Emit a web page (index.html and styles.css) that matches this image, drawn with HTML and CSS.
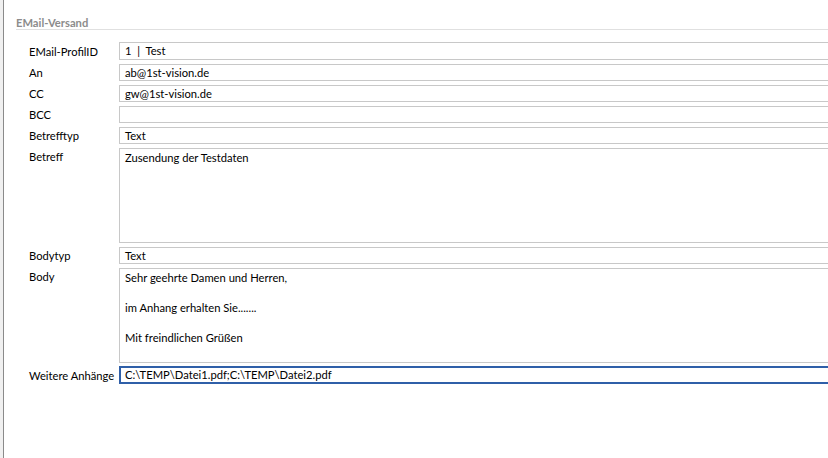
FILE: index.html
```html
<!DOCTYPE html>
<html lang="de">
<head>
    <meta charset="UTF-8">
    <meta name="viewport" content="width=device-width, initial-scale=1.0">
    <title>EMail-Versand</title>
    <link rel="stylesheet" href="styles.css">
</head>
<body>
    <div class="frame">
        <div class="section">
            <div class="section-title">EMail-Versand</div>
            <div class="form">
                <label class="lbl">EMail-ProfilID</label>
                <div class="field first">1&nbsp; |&nbsp; Test</div>

                <label class="lbl">An</label>
                <div class="field">ab@1st-vision.de</div>

                <label class="lbl">CC</label>
                <div class="field">gw@1st-vision.de</div>

                <label class="lbl">BCC</label>
                <div class="field"></div>

                <label class="lbl">Betrefftyp</label>
                <div class="field">Text</div>

                <label class="lbl">Betreff</label>
                <div class="field area">Zusendung der Testdaten</div>

                <label class="lbl">Bodytyp</label>
                <div class="field">Text</div>

                <label class="lbl">Body</label>
                <div class="field area">Sehr geehrte Damen und Herren,<br><br>im Anhang erhalten Sie.......<br><br>Mit freindlichen Grüßen</div>

                <label class="lbl">Weitere Anhänge</label>
                <div class="field focused">C:\TEMP\Datei1.pdf;C:\TEMP\Datei2.pdf</div>
            </div>
        </div>
    </div>
</body>
</html>
```

FILE: styles.css
```css
html, body {
    margin: 0;
    padding: 0;
    height: 100%;
    overflow: hidden;
    background: #fff;
}
body {
    font-family: Lato, 'Noto Sans', sans-serif;
    font-size: 11.2px;
    color: #000;
}
.frame {
    height: 100%;
    border-left: 3px solid #f0f0f0;
    box-shadow: inset 1px 0 0 #8a8a8a;
    overflow: hidden;
}
.section {
    padding: 16px 0 0 13px;
}
.section-title {
    font-weight: bold;
    color: #8c8c8c;
    line-height: 13px;
    border-bottom: 1px solid #e0e0e0;
}
.form {
    display: grid;
    grid-template-columns: 90px 1fr;
    row-gap: 4px;
    padding: 13px 0 0 13px;
    margin-right: -20px;
}
.lbl {
    line-height: 17px;
    white-space: nowrap;
}
.field {
    height: 17px;
    box-sizing: border-box;
    border: 1px solid #c8c8c8;
    padding: 0 5px;
    line-height: 15px;
    white-space: nowrap;
}
.field.first {
    height: 18px;
    margin-top: -1px;
    line-height: 16px;
}
.field.area {
    height: 95px;
    padding-top: 1px;
    white-space: normal;
}
.field.focused {
    height: 18px;
    margin-top: -1px;
    border: 2px solid #2f5fa8;
    padding: 0 4px;
    line-height: 14px;
}
```
